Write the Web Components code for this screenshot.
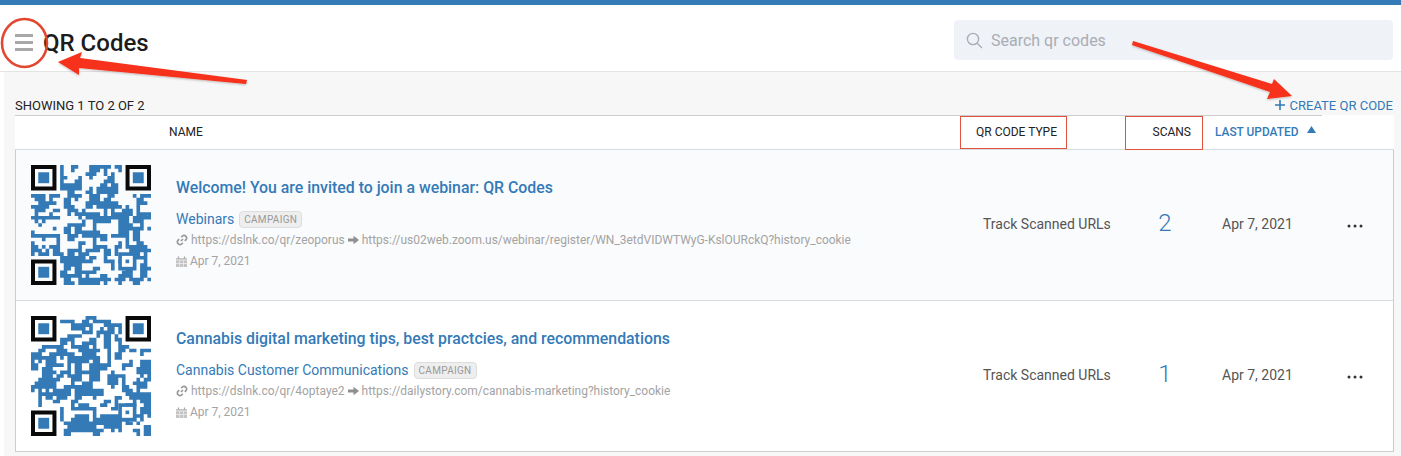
<!DOCTYPE html>
<html>
<head>
<meta charset="utf-8">
<title>QR Codes</title>
<style>
  html, body { margin: 0; background: #fff; font-family: Roboto, "Liberation Sans", sans-serif; }
  body { position: relative; width: 1401px; height: 456px; overflow: hidden; }
</style>
</head>
<body>
<qr-page></qr-page>
<qr-annotations></qr-annotations>
<script>
function data() {
    return [
        {
            "titulo": "Welcome! You are invited to join a webinar: QR Codes",
            "campana": "Webinars",
            "corto": "https://dslnk.co/qr/zeoporus",
            "largo": "https://us02web.zoom.us/webinar/register/WN_3etdVIDWTWyG-KslOURckQ?history_cookie",
            "fecha": "Apr 7, 2021",
            "tipo": "Track Scanned URLs",
            "scans": 2,
            "semilla": 1733
        },
        {
            "titulo": "Cannabis digital marketing tips, best practcies, and recommendations",
            "campana": "Cannabis Customer Communications",
            "corto": "https://dslnk.co/qr/4optaye2",
            "largo": "https://dailystory.com/cannabis-marketing?history_cookie",
            "fecha": "Apr 7, 2021",
            "tipo": "Track Scanned URLs",
            "scans": 1,
            "semilla": 90210
        }
    ];
}

// modulos pseudoaleatorios con manchas, como un QR real de 33x33
function modulosQr(semilla) {
    let s = semilla;
    const azar = () => (s = (s * 16807) % 2147483647) / 2147483647;
    const n = 33;
    const base = [];
    for (let y = 0; y < n; y++) {
        base.push([]);
        for (let x = 0; x < n; x++) base[y].push(azar() < 0.52 ? 1 : 0);
    }
    const en = (x, y) => (base[y] && base[y][x]) || 0;
    const filas = [];
    for (let y = 0; y < n; y++) {
        filas.push([]);
        for (let x = 0; x < n; x++) {
            const vecinos = en(x - 1, y) + en(x + 1, y) + en(x, y - 1) + en(x, y + 1);
            const lleno = en(x, y)
                ? vecinos >= 2 || (vecinos === 1 && azar() < 0.6)
                : vecinos >= 3 && azar() < 0.6;
            const ojo = (x < 8 && y < 8) || (x > 24 && y < 8) || (x < 8 && y > 24);
            filas[y].push(lleno && !ojo ? 1 : 0);
        }
    }
    return filas;
}

class QrImagen extends HTMLElement {
    set semilla(valor) {
        const root = this.shadowRoot || this.attachShadow({ mode: 'open' });
        let d = '';
        modulosQr(valor).forEach((fila, y) => {
            fila.forEach((v, x) => {
                if (v) d += `M${x} ${y}h1v1h-1z`;
            });
        });
        const ojo = (x, y) => `
            <path d="M${x} ${y}h7v7h-7z M${x + 1.1} ${y + 1.1}v4.8h4.8v-4.8z" fill="#0a0a0a" fill-rule="evenodd"/>
            <rect x="${x + 2}" y="${y + 2}" width="3" height="3" fill="#337ab7"/>`;
        root.innerHTML = `
            <style>
                :host { display: block; width: 120px; height: 120px; }
                svg { display: block; }
            </style>
            <svg width="120" height="120" viewBox="0 0 33 33">
                <path d="${d}" fill="#337ab7"/>
                ${ojo(0, 0)}${ojo(26, 0)}${ojo(0, 26)}
                <rect x="24" y="24" width="5" height="5" fill="#337ab7"/>
                <rect x="25" y="25" width="3" height="3" fill="#fff"/>
                <rect x="26" y="26" width="1" height="1" fill="#337ab7"/>
            </svg>`;
    }
}

class QrFila extends HTMLElement {
    constructor() {
        super();
        this.attachShadow({ mode: 'open' });
    }

    set datos(d) {
        this.shadowRoot.innerHTML = `
            <style>
                :host {
                    display: grid;
                    grid-template-columns: 160px 807px 162px 40px 160px 1fr;
                    align-items: center;
                    height: 150px;
                    border-bottom: 1px solid #d9dcdf;
                    background: var(--fondo, #fff);
                }
                .qr { padding-left: 15px; }
                .main { align-self: start; padding-top: 28px; }
                .titulo { font-size: 15.85px; font-weight: 500; line-height: 19px; color: #337ab7; white-space: nowrap; }
                .campana { display: flex; align-items: center; gap: 5px; margin-top: 13px; height: 18px; font-size: 14px; color: #337ab7; }
                .badge {
                    box-sizing: border-box; height: 17px; width: 63px; line-height: 15px; text-align: center;
                    font-size: 10px; letter-spacing: .3px; color: #999;
                    background: #eee; border: 1px solid #ddd; border-radius: 4px;
                }
                .linea { display: flex; align-items: center; gap: 3px; font-size: 11.97px; line-height: 14px; color: #a3a3a3; white-space: nowrap; }
                .urls { margin-top: 5px; }
                .alta { margin-top: 7px; }
                svg { display: block; flex: none; }
                .tipo, .fecha { font-size: 14px; color: #555; position: relative; top: -1px; }
                .fecha { padding-left: 37px; }
                .scans { font-size: 24px; font-weight: 300; color: #337ab7; text-align: center; position: relative; top: -2px; }
                .puntos { margin-left: 2px; position: relative; top: 1px; }
            </style>
            <div class="qr"><qr-imagen></qr-imagen></div>
            <div class="main">
                <div class="titulo">${d.titulo}</div>
                <div class="campana"><span>${d.campana}</span><span class="badge">CAMPAIGN</span></div>
                <div class="linea urls">
                    <svg width="12" height="12" viewBox="0 0 12 12" fill="none" stroke="#999" stroke-width="1.7"><path d="M5 7l2-2"/><path d="M5.2 3.2l1.2-1.2a2.3 2.3 0 0 1 3.4 0.2a2.3 2.3 0 0 1 0.2 3.4l-1.2 1.2"/><path d="M6.8 8.8l-1.2 1.2a2.3 2.3 0 0 1-3.4-0.2a2.3 2.3 0 0 1-0.2-3.4l1.2-1.2"/></svg>
                    <span>${d.corto}</span>
                    <svg width="11" height="10" viewBox="0 0 11 10"><path d="M0 3.6h5.5V.8L11 5 5.5 9.2V6.4H0z" fill="#8f8f8f"/></svg>
                    <span>${d.largo}</span>
                </div>
                <div class="linea alta">
                    <svg width="11" height="11" viewBox="0 0 11 11"><path d="M0 2h11v9H0z" fill="#c4c4c4"/><path d="M0 4h11M3.6 4v7M7.3 4v7M0 7.5h11" stroke="#f2f2f2" stroke-width=".7"/><path d="M2.5 .5v2M8.5 .5v2" stroke="#a3a3a3" stroke-width="1.2"/></svg>
                    <span>${d.fecha}</span>
                </div>
            </div>
            <div class="tipo">${d.tipo}</div>
            <div class="scans">${d.scans}</div>
            <div class="fecha">${d.fecha}</div>
            <svg class="puntos" width="16" height="4" viewBox="0 0 16 4"><circle cx="2" cy="2" r="1.5" fill="#333"/><circle cx="8" cy="2" r="1.5" fill="#333"/><circle cx="14" cy="2" r="1.5" fill="#333"/></svg>`;
        this.shadowRoot.querySelector('qr-imagen').semilla = d.semilla;
    }
}

class QrTabla extends HTMLElement {
    constructor() {
        super();
        this.attachShadow({ mode: 'open' });
    }

    connectedCallback() {
        this.shadowRoot.innerHTML = `
            <style>
                :host { display: block; background: #fff; }
                .cabecera {
                    display: grid;
                    grid-template-columns: 154px 807px 176px 63px 1fr;
                    align-items: center;
                    box-sizing: border-box;
                    height: 34px;
                    font-size: 12px;
                    color: #222;
                    background: linear-gradient(#ccc, #ccc) top left / 1307px 1px no-repeat, #fff;
                }
                .cabecera div:first-child { grid-column: 2; margin-left: 0; }
                .actual { display: flex; align-items: center; gap: 9px; font-weight: 500; font-size: 11.9px; color: #337ab7; }
                .cuerpo { border: 1px solid #ccc; border-top-color: #d9dcdf; border-bottom: none; }
                qr-fila:first-child { --fondo: #fafbfd; }
                qr-fila:last-child { border-bottom-color: #ccc; }
            </style>
            <div class="cabecera">
                <div>NAME</div>
                <div>QR CODE TYPE</div>
                <div style="text-align:right;padding-right:24px;margin-left:-24px">SCANS</div>
                <div class="actual">LAST UPDATED
                    <svg width="9" height="7" viewBox="0 0 9 7" style="margin-top:-6px"><path d="M4.5 0l4.5 7H0z" fill="#337ab7"/></svg>
                </div>
            </div>
            <div class="cuerpo"></div>`;
        const cuerpo = this.shadowRoot.querySelector('.cuerpo');
        data().forEach(d => {
            const fila = document.createElement('qr-fila');
            cuerpo.appendChild(fila);
            fila.datos = d;
        });
    }
}

class QrPage extends HTMLElement {
    constructor() {
        super();
        this.attachShadow({ mode: 'open' });
        this.shadowRoot.innerHTML = `
            <style>
                :host { display: block; border-top: 5px solid #337ab7; }
                header {
                    display: flex; align-items: center; justify-content: space-between;
                    box-sizing: border-box; height: 67px; padding: 0 8px 0 15px;
                    border-bottom: 1px solid #e3e3e3;
                }
                .izq { display: flex; align-items: center; gap: 11px; margin-top: 8px; }
                .menu { width: 18px; display: grid; gap: 4px; }
                .menu i { display: block; height: 3px; background: #a8a8a8; }
                h1 { margin: 0; font-size: 24px; line-height: 28px; font-weight: 500; color: #1c1c1c; position: relative; top: 1px; left: -1px; }
                .buscar {
                    display: flex; align-items: center; gap: 8px;
                    box-sizing: border-box; width: 439px; height: 40px; padding-left: 12px; margin-top: 4px;
                    background: #eff2f7; border-radius: 4px;
                    font-size: 16px; color: #a9adb5;
                }
                main { margin-left: 4px; padding: 25px 7px 4px 11px; background: #f7f7f7; }
                .barra { display: flex; justify-content: space-between; align-items: center; height: 16px; margin-bottom: 2px; font-size: 13px; color: #222; }
                .crear { display: flex; align-items: center; gap: 5px; color: #337ab7; margin-right: 1px; }
            </style>
            <header>
                <div class="izq">
                    <div class="menu"><i></i><i></i><i></i></div>
                    <h1>QR Codes</h1>
                </div>
                <div class="buscar">
                    <svg width="17" height="17" viewBox="0 0 17 17" fill="none" stroke="#a9adb5" stroke-width="1.4"><circle cx="7" cy="7" r="5.6"/><path d="M11.2 11.2l4.8 4.8"/></svg>
                    <span>Search qr codes</span>
                </div>
            </header>
            <main>
                <div class="barra">
                    <span>SHOWING 1 TO 2 OF 2</span>
                    <span class="crear">
                        <svg width="10" height="10" viewBox="0 0 10 10"><path d="M5 0v10M0 5h10" stroke="#337ab7" stroke-width="1.6"/></svg>
                        CREATE QR CODE
                    </span>
                </div>
                <qr-tabla></qr-tabla>
            </main>`;
    }
}

// flechas y recuadros rojos pintados sobre la captura
class QrAnnotations extends HTMLElement {
    constructor() {
        super();
        this.attachShadow({ mode: 'open' });
        this.shadowRoot.innerHTML = `
            <style>
                :host { position: absolute; left: 0; top: 0; width: 1401px; height: 456px; pointer-events: none; }
                svg { display: block; }
            </style>
            <svg width="1401" height="456" viewBox="0 0 1401 456">
                <defs><filter id="sombra" x="-5%" y="-20%" width="110%" height="150%"><feDropShadow dx="0" dy="1" stdDeviation="1" flood-color="#000" flood-opacity=".25"/></filter></defs>
                <ellipse cx="24.5" cy="43" rx="22.5" ry="24" fill="none" stroke="#e2472f" stroke-width="2.6"/>
                <rect x="960.5" y="116.5" width="106" height="32" fill="none" stroke="#e2533f" stroke-width="1"/>
                <rect x="1125.5" y="116.5" width="77" height="33" fill="none" stroke="#e2533f" stroke-width="1"/>
                <g fill="#f7301a" filter="url(#sombra)">
                    <path d="M58 62L82 52L80 58L247 80L246 84L79 68L79 75z"/>
                    <path d="M1133 41L1272 84L1274 79L1292 96L1267 99L1270 92L1132 45z"/>
                </g>
            </svg>`;
    }
}

customElements.define('qr-imagen', QrImagen);
customElements.define('qr-fila', QrFila);
customElements.define('qr-tabla', QrTabla);
customElements.define('qr-page', QrPage);
customElements.define('qr-annotations', QrAnnotations);
</script>
</body>
</html>
